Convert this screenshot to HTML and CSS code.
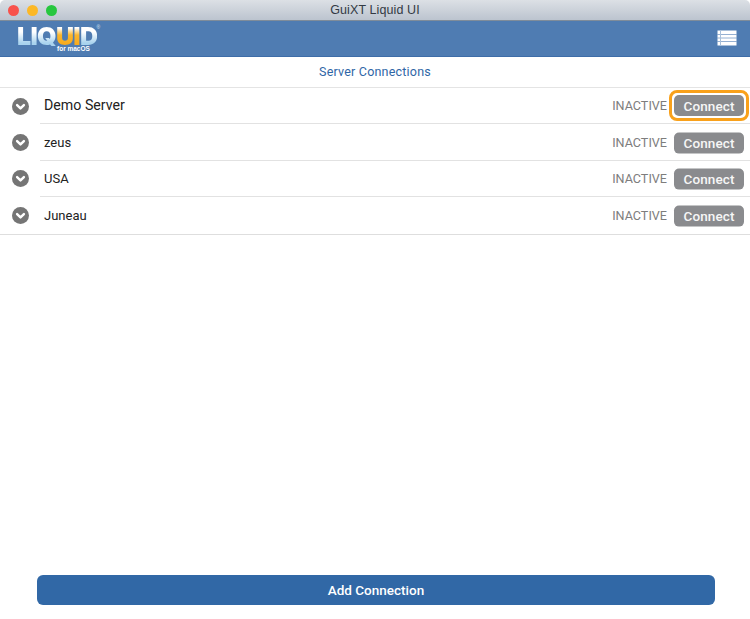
FILE: index.html
```html
<!DOCTYPE html>
<html lang="en">
<head>
<meta charset="utf-8">
<title>GuiXT Liquid UI</title>
<link rel="stylesheet" href="styles.css">
</head>
<body>
<div class="window">
  <div class="titlebar">
    <div class="lights">
      <span class="light red"></span>
      <span class="light yellow"></span>
      <span class="light green"></span>
    </div>
    <div class="title">GuiXT Liquid UI</div>
  </div>
  <header class="appbar">
    <div class="logo">
      <div class="wordmark"><span class="lq">LIQ</span><span class="ui">UI</span><span class="lq">D</span></div>
      <div class="reg">®</div>
      <div class="formac">for macOS</div>
    </div>
    <svg class="menu" width="20" height="16" viewBox="0 0 20 16" aria-hidden="true">
      <rect x="0.5" y="0.5" width="19" height="15" fill="#fff"/>
      <path d="M0 4.5H20M0 8H20M0 11.5H20" stroke="#7a9cc6" stroke-width="0.8"/>
      <path d="M3.5 0V16" stroke="#a9c0da" stroke-width="1"/>
    </svg>
  </header>
  <div class="subtitle">Server Connections</div>
  <ul class="list">
    <li class="row row-first">
      <svg class="chev" width="17" height="17" viewBox="0 0 18 18" aria-hidden="true"><circle cx="9" cy="9" r="9" fill="#757575"/><path d="M5.4 7.5L9 11l3.6-3.5" fill="none" stroke="#fff" stroke-width="2.6" stroke-linecap="round" stroke-linejoin="round"/></svg>
      <div class="row-body"><span class="name name-lg">Demo Server</span><span class="status">INACTIVE</span><span class="focus"><button class="connect">Connect</button></span></div>
    </li>
    <li class="row">
      <svg class="chev" width="17" height="17" viewBox="0 0 18 18" aria-hidden="true"><circle cx="9" cy="9" r="9" fill="#757575"/><path d="M5.4 7.5L9 11l3.6-3.5" fill="none" stroke="#fff" stroke-width="2.6" stroke-linecap="round" stroke-linejoin="round"/></svg>
      <div class="row-body"><span class="name">zeus</span><span class="status">INACTIVE</span><span class="plain"><button class="connect">Connect</button></span></div>
    </li>
    <li class="row">
      <svg class="chev" width="17" height="17" viewBox="0 0 18 18" aria-hidden="true"><circle cx="9" cy="9" r="9" fill="#757575"/><path d="M5.4 7.5L9 11l3.6-3.5" fill="none" stroke="#fff" stroke-width="2.6" stroke-linecap="round" stroke-linejoin="round"/></svg>
      <div class="row-body"><span class="name">USA</span><span class="status">INACTIVE</span><span class="plain"><button class="connect">Connect</button></span></div>
    </li>
    <li class="row row-last">
      <svg class="chev" width="17" height="17" viewBox="0 0 18 18" aria-hidden="true"><circle cx="9" cy="9" r="9" fill="#757575"/><path d="M5.4 7.5L9 11l3.6-3.5" fill="none" stroke="#fff" stroke-width="2.6" stroke-linecap="round" stroke-linejoin="round"/></svg>
      <div class="row-body"><span class="name">Juneau</span><span class="status">INACTIVE</span><span class="plain"><button class="connect">Connect</button></span></div>
    </li>
  </ul>
  <div class="footer"><button class="add">Add Connection</button></div>
</div>
</body>
</html>
```

FILE: styles.css
```css
* { box-sizing: border-box; }
html, body { margin: 0; padding: 0; background: #fff; }
body { font-family: Roboto, "Liberation Sans", sans-serif; }
.window { width: 750px; height: 619px; display: flex; flex-direction: column; background: #fff; }
.titlebar { position: relative; height: 21px; flex: none; display: flex; align-items: center; justify-content: center; background: linear-gradient(#dce0e5, #bcc4cf); border-radius: 5px 5px 0 0; border-bottom: 1px solid #7f8c9a; }
.lights { position: absolute; left: 8px; top: 5px; display: flex; gap: 8px; }
.light { width: 11px; height: 11px; border-radius: 50%; }
.red { background: #f8524c; }
.yellow { background: #fcb826; }
.green { background: #27c73f; }
.title { font: 12.5px "Liberation Sans", sans-serif; color: #333a44; letter-spacing: 0.1px; }
.appbar { height: 36px; flex: none; display: flex; align-items: center; justify-content: space-between; padding: 0 13px 1px 17px; background: #4f7cb2; border-bottom: 1px solid #3e6da8; }
.logo { position: relative; width: 82px; height: 30px; margin-top: -1px; }
.wordmark { display: flex; width: 79px; padding-top: 3px; font: 900 25px/20px Inter, "Liberation Sans", sans-serif; letter-spacing: -0.7px; white-space: nowrap; }
.lq, .ui { display: block; height: 20px; -webkit-background-clip: text; background-clip: text; color: transparent; }
.lq { background-image: linear-gradient(#fff 30%, #a9d3ee 85%); }
.ui { background-image: linear-gradient(#fff 10%, #fbb62c 45%, #f5a81c); }
.reg { position: absolute; left: 79.5px; top: 2px; font: 5px/5px "Liberation Sans", sans-serif; color: #dfe8f2; }
.formac { position: absolute; left: 40px; top: 23.5px; font: 700 6.5px/6px "Liberation Sans", sans-serif; color: #fff; white-space: nowrap; }
.menu { display: block; }
.subtitle { height: 31px; flex: none; display: flex; align-items: center; justify-content: center; padding-bottom: 2px; font-size: 12.5px; color: #2f66a6; letter-spacing: 0.2px; border-bottom: 1px solid #e4e4e4; }
.list { list-style: none; margin: 0; padding: 0; border-bottom: 1px solid #dedede; }
.row { display: flex; align-items: center; height: 36.4px; padding-left: 12px; }
.chev { flex: none; margin-right: 11px; }
.row-body { flex: 1; height: 100%; display: flex; align-items: center; padding: 0 6px 0 4px; border-bottom: 1px solid #e2e2e2; }
.row-last .row-body { border-bottom: 0; }
.name { flex: 1; font-size: 13px; color: #222; }
.name-lg { font-size: 14.2px; padding-bottom: 2px; }
.status { font-size: 12.6px; color: #7d7d7d; margin-right: 7px; }
.focus, .plain { display: flex; margin: 0 -3px; }
.focus { padding: 3px; outline: 3px solid #f9a11b; outline-offset: -1px; border-radius: 6px; }
.plain { padding: 3px; }
.connect { width: 70px; height: 21px; padding: 1px 0 0; border: 0; border-radius: 5px; background: #8a8b8e; color: #f6f6f6; font: 500 13.5px Roboto, "Liberation Sans", sans-serif; letter-spacing: 0.1px; }
.plain .connect { transform: translateY(0.6px); padding-top: 0; }
.footer { margin-top: auto; padding: 0 35px 14px 37px; }
.add { display: block; width: 100%; height: 30px; border: 0; border-radius: 6px; background: #3168a6; color: #fff; font: 500 13.5px Roboto, "Liberation Sans", sans-serif; }
```
